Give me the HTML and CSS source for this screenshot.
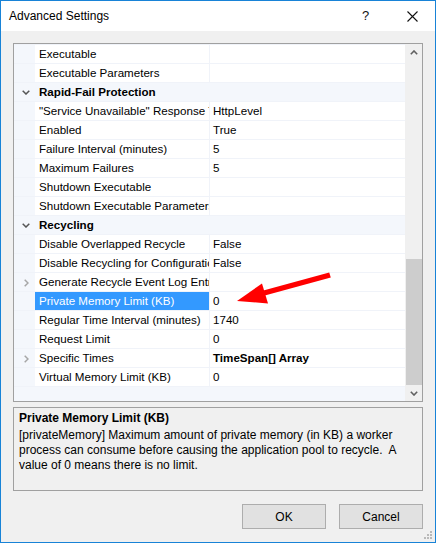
FILE: index.html
```html
<!DOCTYPE html>
<html>
<head>
<meta charset="utf-8">
<link rel="stylesheet" href="styles.css">
</head>
<body>
<div class="window">
  <div class="titlebar">
    <span class="title">Advanced Settings</span>
    <span class="help">?</span>
    <span class="close"><svg width="11" height="11" viewBox="0 0 11 11"><path d="M0.5 0.5 L10.5 10.5 M10.5 0.5 L0.5 10.5" stroke="#111" stroke-width="1.1" fill="none"/></svg></span>
  </div>
  <div class="body">
    <div class="grid">
      <div class="rows">
        <div class="row"><div class="gut"></div><div class="name">Executable</div><div class="val"></div></div>
        <div class="row"><div class="gut"></div><div class="name">Executable Parameters</div><div class="val"></div></div>
        <div class="row cat"><div class="gut"><svg class="chev-down" width="8" height="5" viewBox="0 0 8 5"><path d="M0.7 0.7 L4 4 L7.3 0.7" stroke="#555" stroke-width="1.5" fill="none"/></svg></div><div class="name">Rapid-Fail Protection</div></div>
        <div class="row"><div class="gut"></div><div class="name">"Service Unavailable" Response Type</div><div class="val">HttpLevel</div></div>
        <div class="row"><div class="gut"></div><div class="name">Enabled</div><div class="val">True</div></div>
        <div class="row"><div class="gut"></div><div class="name">Failure Interval (minutes)</div><div class="val">5</div></div>
        <div class="row"><div class="gut"></div><div class="name">Maximum Failures</div><div class="val">5</div></div>
        <div class="row"><div class="gut"></div><div class="name">Shutdown Executable</div><div class="val"></div></div>
        <div class="row"><div class="gut"></div><div class="name">Shutdown Executable Parameters</div><div class="val"></div></div>
        <div class="row cat"><div class="gut"><svg class="chev-down" width="8" height="5" viewBox="0 0 8 5"><path d="M0.7 0.7 L4 4 L7.3 0.7" stroke="#555" stroke-width="1.5" fill="none"/></svg></div><div class="name">Recycling</div></div>
        <div class="row"><div class="gut"></div><div class="name">Disable Overlapped Recycle</div><div class="val">False</div></div>
        <div class="row"><div class="gut"></div><div class="name">Disable Recycling for Configuration Changes</div><div class="val">False</div></div>
        <div class="row"><div class="gut"><svg class="chev-right" width="5" height="8" viewBox="0 0 5 8"><path d="M0.7 0.7 L4 4 L0.7 7.3" stroke="#a6a6a6" stroke-width="1.5" fill="none"/></svg></div><div class="name">Generate Recycle Event Log Entry</div><div class="val"></div></div>
        <div class="row"><div class="gut"></div><div class="name selected">Private Memory Limit (KB)</div><div class="val">0</div></div>
        <div class="row"><div class="gut"></div><div class="name">Regular Time Interval (minutes)</div><div class="val">1740</div></div>
        <div class="row"><div class="gut"></div><div class="name">Request Limit</div><div class="val">0</div></div>
        <div class="row"><div class="gut"><svg class="chev-right" width="5" height="8" viewBox="0 0 5 8"><path d="M0.7 0.7 L4 4 L0.7 7.3" stroke="#a6a6a6" stroke-width="1.5" fill="none"/></svg></div><div class="name">Specific Times</div><div class="val bold">TimeSpan[] Array</div></div>
        <div class="row last"><div class="gut"></div><div class="name">Virtual Memory Limit (KB)</div><div class="val">0</div></div>
      </div>
      <div class="scrollbar">
        <div class="sb-btn"><svg width="8" height="5" viewBox="0 0 8 5"><path d="M0.8 4.2 L4 1 L7.2 4.2" stroke="#606060" stroke-width="1.6" fill="none"/></svg></div>
        <div class="sb-track"><div class="sb-thumb"></div></div>
        <div class="sb-btn down"><svg width="8" height="5" viewBox="0 0 8 5"><path d="M0.8 0.8 L4 4 L7.2 0.8" stroke="#606060" stroke-width="1.6" fill="none"/></svg></div>
      </div>
    </div>
    <div class="desc">
      <div class="desc-title">Private Memory Limit (KB)</div>
      <div class="desc-text">[privateMemory] Maximum amount of private memory (in KB) a worker<br>process can consume before causing the application pool to recycle.&nbsp; A<br>value of 0 means there is no limit.</div>
    </div>
    <div class="buttons">
      <div class="btn">OK</div>
      <div class="btn">Cancel</div>
    </div>
  </div>
  <svg class="arrow" width="436" height="543" viewBox="0 0 436 543">
    <polygon points="237,301 262,283.5 268,303.5" fill="#ff0000"/>
    <polygon points="263,296 330.8,277.6 329.2,272.4 261.5,291" fill="#ff0000"/>
  </svg>
  <svg class="grip" width="10" height="10" viewBox="0 0 10 10">
    <rect x="7" y="1" width="2" height="2" fill="#b9b9b9"/>
    <rect x="4" y="4" width="2" height="2" fill="#b9b9b9"/>
    <rect x="7" y="4" width="2" height="2" fill="#b9b9b9"/>
    <rect x="1" y="7" width="2" height="2" fill="#b9b9b9"/>
    <rect x="4" y="7" width="2" height="2" fill="#b9b9b9"/>
    <rect x="7" y="7" width="2" height="2" fill="#b9b9b9"/>
  </svg>
</div>
</body>
</html>
```
FILE: styles.css
```css
* { box-sizing: border-box; }
html, body { margin: 0; padding: 0; background: #ffffff; }
body {
  font-family: "Liberation Sans", Arial, sans-serif;
  font-size: 12px;
  color: #000;
}
.window {
  position: relative;
  width: 436px;
  height: 543px;
  border: 1px solid #1883d7;
  background: #f0f0f0;
  display: flex;
  flex-direction: column;
  overflow: hidden;
}
.titlebar {
  height: 30px;
  background: #ffffff;
  display: flex;
  align-items: center;
  padding-left: 8px;
  flex: none;
}
.title {
  font-size: 12px;
  flex: 1;
  color: #000;
  padding-bottom: 1px;
}
.help {
  font-size: 13px;
  width: 10px;
  margin-right: 35px;
  color: #111;
  padding-bottom: 1px;
}
.close {
  width: 11px;
  height: 11px;
  margin-right: 17px;
  display: flex;
  margin-top: 1px;
}
.body {
  flex: 1;
  padding: 12px 12px 0 12px;
  display: flex;
  flex-direction: column;
}
.grid {
  height: 359px;
  border: 1px solid #a0a0a0;
  display: flex;
  background: #f4f7fc;
  flex: none;
}
.rows {
  width: 391px;
  display: flex;
  flex-direction: column;
}
.row {
  height: 19px;
  border-top: 1px solid #f0f3f9;
  display: flex;
  background: #fff;
  font-size: 11.6px;
  line-height: 18px;
}
.row.last { border-bottom: 1px solid #f0f3f9; height: 20px; }
.gut {
  width: 21px;
  flex: none;
  background: #f4f7fc;
  display: flex;
  align-items: center;
  justify-content: center;
}
.chev-down { margin-left: 2px; margin-top: 1px; }
.chev-right { margin-left: 4px; margin-top: 1px; }
.name {
  width: 175px;
  flex: none;
  padding-left: 4px;
  border-right: 1px solid #f0f3f9;
  white-space: nowrap;
  overflow: hidden;
}
.name.selected {
  background: #3399ff;
  color: #fff;
}
.val {
  flex: 1;
  padding-left: 3px;
  white-space: nowrap;
  overflow: hidden;
}
.bold { font-weight: bold; }
.row.cat { background: #f4f7fc; }
.row.cat .name {
  border-right: none;
  font-weight: bold;
  width: auto;
  flex: 1;
}
.scrollbar {
  width: 17px;
  flex: none;
  background: #f0f0f0;
  display: flex;
  flex-direction: column;
}
.sb-btn {
  height: 17px;
  display: flex;
  align-items: center;
  justify-content: center;
  flex: none;
}
.sb-btn.down { height: 16px; }
.sb-track {
  flex: 1;
  display: flex;
  flex-direction: column;
  justify-content: flex-end;
}
.sb-thumb {
  height: 126px;
  background: #cdcdcd;
  margin-left: 1px;
}
.desc {
  margin-top: 5px;
  height: 84px;
  border: 1px solid #a0a0a0;
  background: #f0f0f0;
  padding: 3px 5px;
  flex: none;
}
.desc-title {
  font-weight: bold;
  line-height: 15px;
  font-size: 12px;
}
.desc-text {
  line-height: 15px;
  font-size: 12px;
  margin-top: 2px;
  white-space: nowrap;
}
.buttons {
  margin-top: 13px;
  display: flex;
  justify-content: flex-end;
  gap: 13px;
}
.btn {
  width: 84px;
  height: 25px;
  background: #e1e1e1;
  border: 1px solid #adadad;
  display: flex;
  align-items: center;
  justify-content: center;
  font-size: 12px;
}
.arrow {
  position: absolute;
  left: -1px;
  top: -1px;
  pointer-events: none;
}
.grip {
  position: absolute;
  right: 2px;
  bottom: 2px;
}
```
